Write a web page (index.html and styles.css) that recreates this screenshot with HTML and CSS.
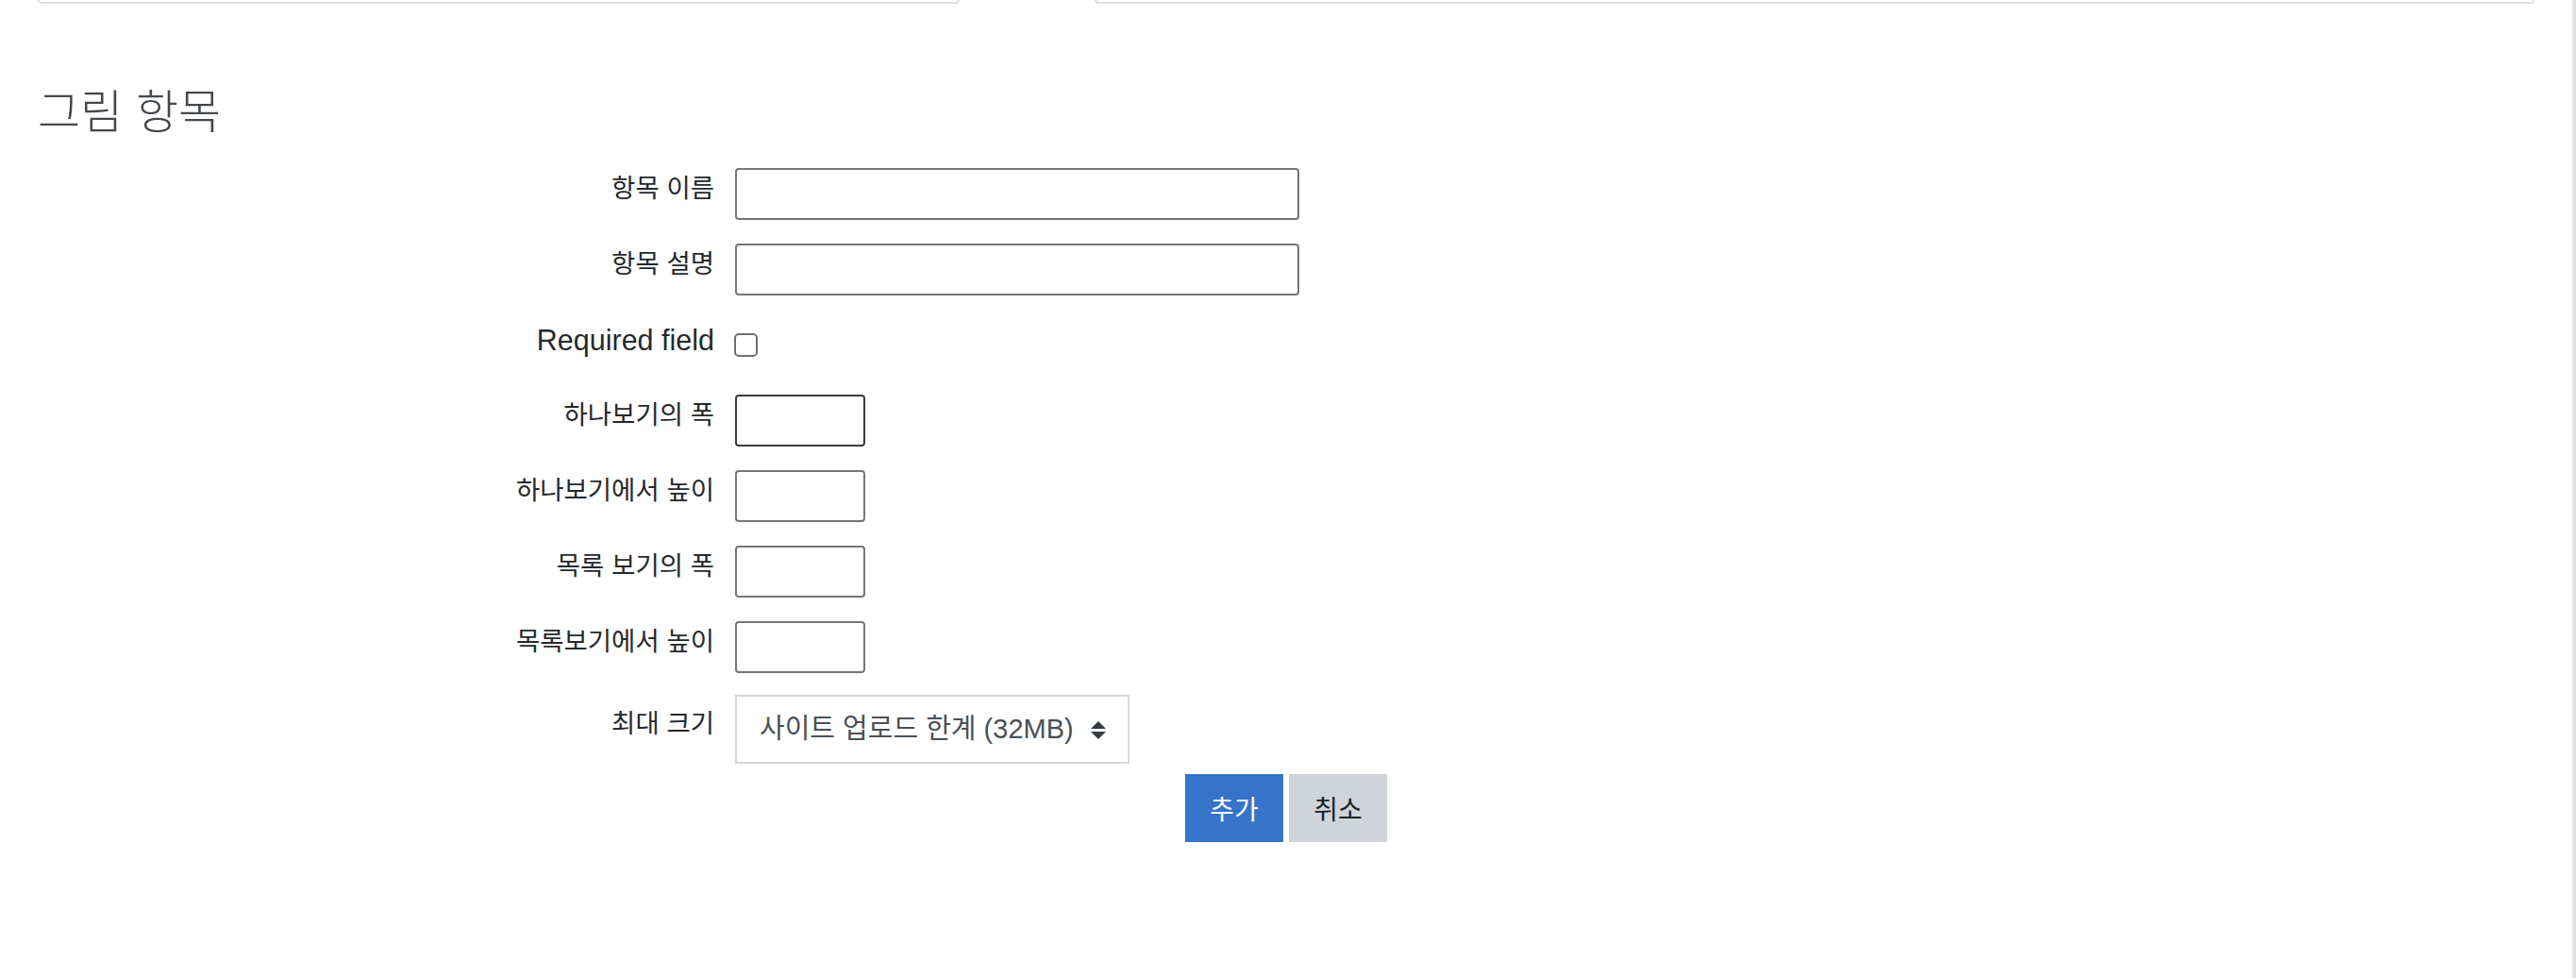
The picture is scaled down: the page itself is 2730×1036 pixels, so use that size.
FILE: index.html
```html
<!DOCTYPE html>
<html lang="ko">
<head>
    <meta charset="UTF-8">
    <meta name="viewport" content="width=device-width, initial-scale=1.0">
    <title>그림 항목</title>
    <link rel="stylesheet" href="styles.css">
</head>
<body>

    <div class="page">
        <div class="top-stubs">
            <div class="stub stub-left"></div>
            <div class="stub stub-right"></div>
        </div>

        <form class="field-form">
            <h3 class="legend">그림 항목</h3>

            <div class="form-grid">
                <label class="form-label" for="name">항목 이름</label>
                <div class="field"><input type="text" id="name" class="text-input wide"></div>

                <label class="form-label" for="description">항목 설명</label>
                <div class="field"><input type="text" id="description" class="text-input wide"></div>

                <label class="form-label latin" for="required">Required field</label>
                <div class="field field-check"><input type="checkbox" id="required" class="check"></div>

                <label class="form-label" for="thumbwidth">하나보기의 폭</label>
                <div class="field"><input type="text" id="thumbwidth" class="text-input short hovered"></div>

                <label class="form-label" for="thumbheight">하나보기에서 높이</label>
                <div class="field"><input type="text" id="thumbheight" class="text-input short"></div>

                <label class="form-label" for="listwidth">목록 보기의 폭</label>
                <div class="field"><input type="text" id="listwidth" class="text-input short"></div>

                <label class="form-label" for="listheight">목록보기에서 높이</label>
                <div class="field"><input type="text" id="listheight" class="text-input short"></div>

                <label class="form-label label-select" for="maxsize">최대 크기</label>
                <div class="field field-select">
                    <div class="select-wrap">
                        <select id="maxsize" class="select">
                            <option>사이트 업로드 한계 (32MB)</option>
                        </select>
                        <svg class="select-arrow" width="16" height="19" viewBox="0 0 16 19">
                            <path d="M0 8 L8 0 L16 8 Z" fill="#343a40"/>
                            <path d="M0 11 L8 19 L16 11 Z" fill="#343a40"/>
                        </svg>
                    </div>
                </div>
            </div>

            <div class="actions">
                <button type="submit" class="btn btn-primary">추가</button>
                <button type="button" class="btn btn-secondary">취소</button>
            </div>
        </form>
    </div>

</body>
</html>
```

FILE: styles.css
```css
body {
    margin: 0;
    padding: 0;
    background-color: #ffffff;
    color: #1d2125;
    font-family: "Noto Sans CJK KR", "Liberation Sans", sans-serif;
}
.page {
    box-sizing: border-box;
    width: 100%;
    min-height: 100vh;
    border-right: 4px solid #e4e4e4;
}
.top-stubs {
    display: flex;
    padding-left: 40px;
}
.stub {
    box-sizing: border-box;
    height: 4px;
    border: 2px solid #dee2e6;
    border-top: none;
    border-radius: 0 0 4px 4px;
}
.stub-left {
    width: 977px;
}
.stub-right {
    width: 1526px;
    margin-left: 143px;
}
.field-form {
    margin: 0;
}
.legend {
    margin: 82px 0 33px 40px;
    font-size: 49px;
    line-height: 1.2;
    font-weight: 300;
    color: #44484c;
}
.form-grid {
    display: grid;
    grid-template-columns: 717px 1fr;
    column-gap: 22px;
    row-gap: 25px;
    padding-left: 40px;
    align-items: start;
}
.form-label {
    text-align: right;
    font-size: 27.5px;
    line-height: 1.45;
    color: #25292d;
}
.form-label.latin {
    font-family: "Liberation Sans", "Noto Sans CJK KR", sans-serif;
    font-size: 30.5px;
    line-height: 1.5;
}
.form-label.label-select {
    margin-top: -2px;
    padding-top: 9px;
}
.field {
    display: flex;
}
.field-check {
    height: 55px;
    align-items: center;
}
.field-select {
    margin-top: -2px;
}
.text-input {
    box-sizing: border-box;
    height: 55px;
    margin: 0;
    padding: 0 10px;
    border: 2px solid #767676;
    border-radius: 4px;
    font-size: 26px;
    background-color: #ffffff;
}
.text-input.wide {
    width: 598px;
}
.text-input.short {
    width: 138px;
}
.text-input.hovered {
    border-color: #3b3b3b;
}
.check {
    appearance: none;
    box-sizing: border-box;
    width: 25px;
    height: 25px;
    margin: 0 0 0 -1px;
    border: 2px solid #6f6f6f;
    border-radius: 5px;
    background-color: #ffffff;
}
.select-wrap {
    position: relative;
    width: 418px;
}
.select {
    appearance: none;
    box-sizing: border-box;
    width: 418px;
    height: 73px;
    margin: 0;
    padding: 0 50px 0 24px;
    border: 2px solid #d4d8dc;
    border-radius: 0;
    background-color: #ffffff;
    color: #495057;
    font-family: "Liberation Sans", "Noto Sans CJK KR", sans-serif;
    font-size: 29px;
}
.select-arrow {
    position: absolute;
    right: 25px;
    top: 28px;
    pointer-events: none;
}
.actions {
    display: flex;
    justify-content: center;
    gap: 6px;
    margin-top: 11px;
}
.btn {
    width: 104px;
    height: 72px;
    padding: 0;
    border: none;
    border-radius: 0;
    font-family: "Noto Sans CJK KR", sans-serif;
    font-size: 28px;
    cursor: pointer;
}
.btn-primary {
    background-color: #3574c9;
    color: #ffffff;
}
.btn-secondary {
    background-color: #ced4da;
    color: #1d2125;
}
```
